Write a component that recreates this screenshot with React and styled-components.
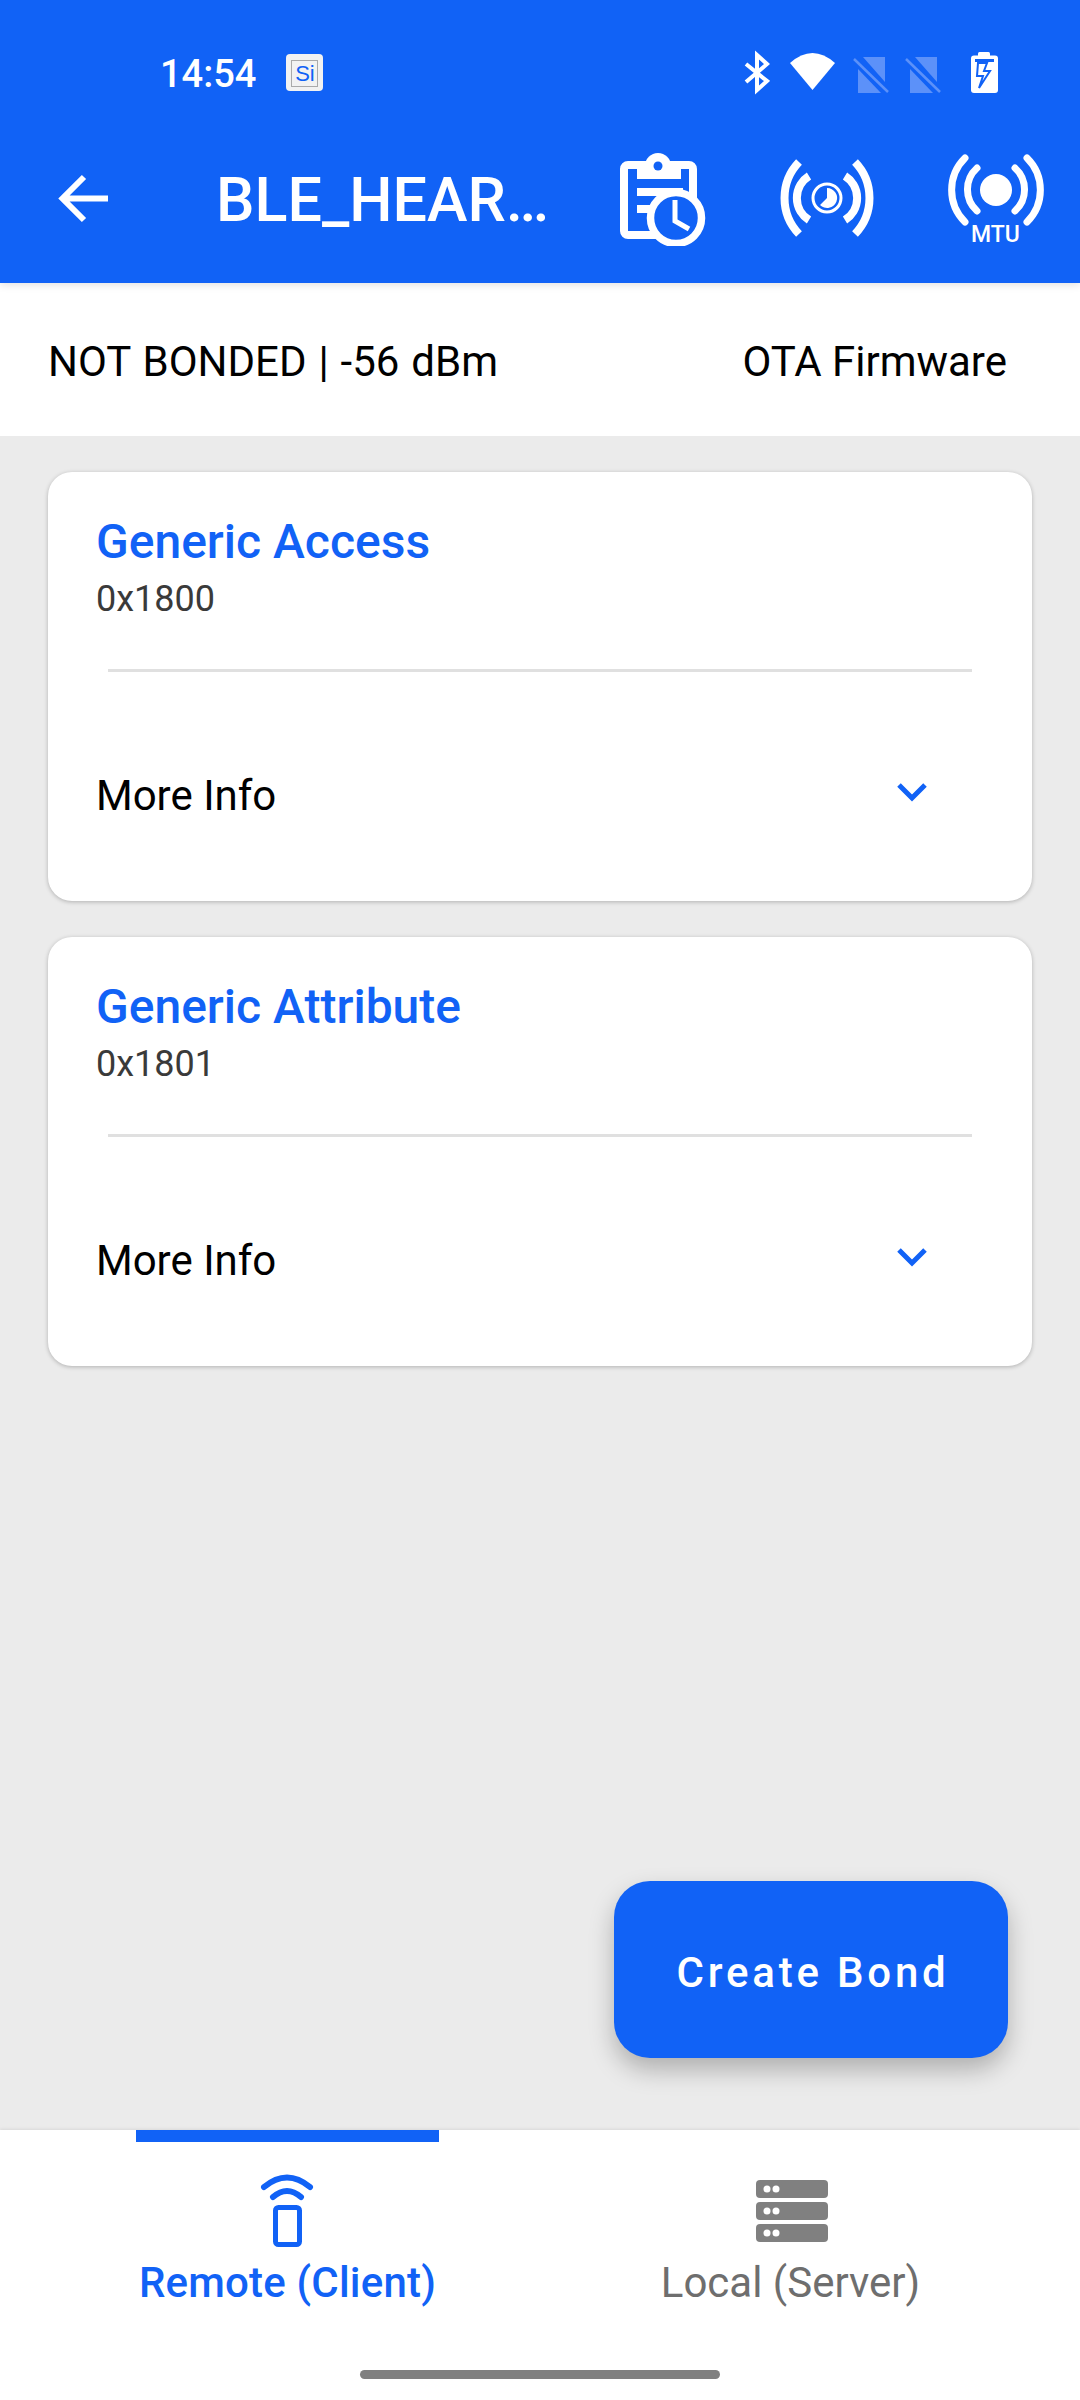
import React from "react";
import styled, { createGlobalStyle } from "styled-components";

const BLUE = "#1162f6";

const services = [
  { name: "Generic Access", uuid: "0x1800" },
  { name: "Generic Attribute", uuid: "0x1801" },
];

function BluetoothIcon() {
  return (
    <Glyph width="28" height="48" viewBox="742 48 28 48" $ml={0}>
      <path d="M746 64 L767 81 L757 90 V55 L767 64 L746 82" fill="none" stroke="#fff" strokeWidth="4" />
    </Glyph>
  );
}

function WifiIcon() {
  return (
    <Glyph width="49" height="48" viewBox="788 48 49 48" $ml={18}>
      <path d="M812.5 90 L790 63 Q812.5 43 835 63 Z" fill="#fff" />
    </Glyph>
  );
}

function SimIcon({ ml }) {
  return (
    <Glyph width="39" height="48" viewBox="851 48 39 48" $ml={ml}>
      <path d="M863 57 H885 V82 Z" fill="#5c91f9" />
      <path d="M858 69 L881 93 H858 Z" fill="#5c91f9" />
      <path d="M854 59 L888 92" stroke="#5c91f9" strokeWidth="2.5" fill="none" />
    </Glyph>
  );
}

function BatteryIcon() {
  return (
    <Glyph width="31" height="48" viewBox="969 48 31 48" $ml={27}>
      <rect x="978" y="52" width="12" height="6" rx="1.5" fill="#fff" />
      <rect x="971" y="55.5" width="27" height="37.5" rx="3" fill="#fff" />
      <rect x="975" y="59" width="19" height="3" fill={BLUE} />
      <path d="M978 63 L977 76 L983 76 L979 88 L990 71 L984 71 L987 63 Z" fill="#fff" stroke={BLUE} strokeWidth="2" />
    </Glyph>
  );
}

function HistoryIcon() {
  return (
    <svg width="94" height="96" viewBox="616 148 94 96">
      <rect x="624" y="163" width="69" height="70" rx="4" fill="none" stroke="#fff" strokeWidth="8" />
      <rect x="637" y="160" width="44" height="17" fill="#fff" />
      <circle cx="658" cy="164" r="13" fill="#fff" />
      <circle cx="658" cy="164" r="4.5" fill={BLUE} />
      <rect x="637" y="186" width="46" height="8" fill="#fff" />
      <rect x="637" y="203" width="20" height="8" fill="#fff" />
      <circle cx="676" cy="216" r="25.5" fill={BLUE} stroke="#fff" strokeWidth="7.5" />
      <path d="M675 198 V219 L689 227" fill="none" stroke="#fff" strokeWidth="5" />
    </svg>
  );
}

function RadioClockIcon() {
  return (
    <svg width="102" height="96" viewBox="776 150 102 96">
      <g fill="none" stroke="#fff" strokeWidth="8">
        <path d="M799 162 A52 52 0 0 0 799 234" />
        <path d="M855 162 A52 52 0 0 1 855 234" />
        <path d="M809 176 A26 26 0 0 0 809 220" />
        <path d="M845 176 A26 26 0 0 1 845 220" />
      </g>
      <circle cx="827" cy="198" r="14" fill="none" stroke="#fff" strokeWidth="3" />
      <path d="M827 188 A10 10 0 1 1 820 205 L827 198 Z" fill="#fff" />
    </svg>
  );
}

function MtuIcon() {
  return (
    <svg width="104" height="112" viewBox="944 150 104 112">
      <g fill="none" stroke="#fff" strokeWidth="7" strokeLinecap="round">
        <path d="M965 158 A45 45 0 0 0 965 222" />
        <path d="M1027 158 A45 45 0 0 1 1027 222" />
        <path d="M977 168 A29 29 0 0 0 977 211" />
        <path d="M1015 168 A29 29 0 0 1 1015 211" />
      </g>
      <circle cx="996" cy="190" r="16" fill="#fff" />
      <MtuText x="995.5" y="242" textAnchor="middle">
        MTU
      </MtuText>
    </svg>
  );
}

function RemoteIcon() {
  return (
    <svg width="75" height="82" viewBox="250 2170 75 82">
      <g fill="none" stroke={BLUE} strokeWidth="6" strokeLinecap="round">
        <path d="M264 2187 Q287 2168 310 2187" />
        <path d="M273 2197 Q287 2185 301 2197" />
      </g>
      <rect x="275.5" y="2207.5" width="24" height="37" rx="3" fill="none" stroke={BLUE} strokeWidth="5" />
    </svg>
  );
}

function LocalIcon() {
  return (
    <svg width="80" height="82" viewBox="751 2170 80 82">
      {[2180, 2202, 2224].map((y) => (
        <g key={y}>
          <rect x="756" y={y} width="72" height="18" rx="4" fill="#808080" />
          <circle cx="767" cy={y + 9} r="3.5" fill="#fff" />
          <circle cx="776" cy={y + 9} r="3.5" fill="#fff" />
        </g>
      ))}
    </svg>
  );
}

function App() {
  return (
    <>
      <GlobalStyle />
      <Page>
        <Header>
          <StatusBar>
            <Time>14:54</Time>
            <SiBadge>
              <SiFrame>Si</SiFrame>
            </SiBadge>
            <StatusIcons>
              <BluetoothIcon />
              <WifiIcon />
              <SimIcon ml={14} />
              <SimIcon ml={13} />
              <BatteryIcon />
            </StatusIcons>
          </StatusBar>
          <Toolbar>
            <svg width="56" height="56" viewBox="56 170 56 56">
              <path d="M108 198.5 H65 M84 177 L62.5 198.5 L84 220" fill="none" stroke="#fff" strokeWidth="6" />
            </svg>
            <Title>BLE_HEAR…</Title>
            <Actions>
              <HistoryIcon />
              <RadioClockIcon />
              <MtuIcon />
            </Actions>
          </Toolbar>
        </Header>

        <SubBar>
          <BondState>NOT BONDED | -56 dBm</BondState>
          <span>OTA Firmware</span>
        </SubBar>

        <Main>
          {services.map((s) => (
            <Card key={s.uuid}>
              <CardName>{s.name}</CardName>
              <CardUuid>{s.uuid}</CardUuid>
              <Divider />
              <MoreRow>
                <span>More Info</span>
                <Chevron width="40" height="28" viewBox="892 778 40 28">
                  <path d="M899 785 L912 798 L925 785" fill="none" stroke={BLUE} strokeWidth="5" />
                </Chevron>
              </MoreRow>
            </Card>
          ))}
          <Fab>Create Bond</Fab>
        </Main>

        <BottomNav>
          <Tabs>
            <Tab $active>
              <RemoteIcon />
              <TabLabel $active>Remote (Client)</TabLabel>
            </Tab>
            <Tab>
              <LocalIcon />
              <TabLabel>Local (Server)</TabLabel>
            </Tab>
          </Tabs>
          <HomeBar />
        </BottomNav>
      </Page>
    </>
  );
}

const GlobalStyle = createGlobalStyle`
  html, body {
    margin: 0;
    padding: 0;
    background: #ebebeb;
  }
  svg {
    display: block;
    flex: none;
  }
`;

const Page = styled.div`
  width: 1080px;
  height: 2400px;
  display: flex;
  flex-direction: column;
  overflow: hidden;
  font-family: Roboto, "Liberation Sans", sans-serif;
  color: #000;
`;

// 상단 헤더
const Header = styled.header`
  position: relative;
  z-index: 2;
  height: 283px;
  background: ${BLUE};
  box-shadow: 0 2px 8px rgba(0, 0, 0, 0.12);
`;

const StatusBar = styled.div`
  height: 62px;
  padding: 48px 80px 0 160px;
  display: flex;
  align-items: flex-start;
`;

const Time = styled.div`
  margin-top: 2px;
  font-size: 38px;
  line-height: 48px;
  font-weight: 500;
  color: #fff;
`;

const SiBadge = styled.div`
  width: 37px;
  height: 37px;
  margin: 6px 0 0 30px;
  box-sizing: border-box;
  padding: 6px 5px;
  background: #f2f2f2;
  border-radius: 4px;
`;

const SiFrame = styled.div`
  height: 25px;
  border: 1px solid #aaa;
  font-family: "Liberation Sans", sans-serif;
  font-size: 22px;
  line-height: 25px;
  text-align: center;
  color: ${BLUE};
`;

const StatusIcons = styled.div`
  margin-left: auto;
  display: flex;
`;

const Glyph = styled.svg`
  margin-left: ${(p) => p.$ml}px;
`;

const Toolbar = styled.div`
  height: 170px;
  padding: 3px 32px 0 56px;
  display: flex;
  align-items: center;
`;

const Title = styled.div`
  margin: 3px 0 0 104px;
  font-size: 61px;
  font-weight: 500;
  color: #fff;
  white-space: nowrap;
`;

// MTU 아이콘은 글자 때문에 아래로 조금 더 길다
const Actions = styled.div`
  height: 96px;
  margin-left: auto;
  display: flex;
  align-items: flex-start;
  gap: 66px;
`;

const MtuText = styled.text`
  font-family: Roboto, sans-serif;
  font-size: 23px;
  font-weight: 500;
  fill: #fff;
`;

// 본딩 상태 바
const SubBar = styled.div`
  height: 150px;
  padding: 3px 73px 0 48px;
  display: flex;
  align-items: center;
  justify-content: space-between;
  background: #fff;
  font-size: 42px;
`;

const BondState = styled.span`
  word-spacing: 1.5px;
`;

const Main = styled.main`
  position: relative;
  flex: 1;
  padding: 36px 48px;
  display: flex;
  flex-direction: column;
  gap: 36px;
  background: #ebebeb;
`;

const Card = styled.section`
  height: 429px;
  box-sizing: border-box;
  padding: 40px 48px 0;
  background: #fff;
  border-radius: 24px;
  box-shadow: 0 1px 4px rgba(0, 0, 0, 0.25);
`;

const CardName = styled.div`
  font-size: 48px;
  line-height: 60px;
  font-weight: 500;
  color: ${BLUE};
`;

const CardUuid = styled.div`
  margin-top: 5px;
  font-size: 36px;
  line-height: 44px;
  color: #3a3a3a;
`;

const Divider = styled.div`
  height: 3px;
  margin: 48px 12px 0;
  background: #e0e0e0;
`;

const MoreRow = styled.div`
  margin-top: 99px;
  padding-right: 52px;
  display: flex;
  justify-content: space-between;
  align-items: flex-start;
  font-size: 42px;
  line-height: 50px;
`;

const Chevron = styled.svg`
  margin-top: 7px;
`;

const Fab = styled.button`
  position: absolute;
  right: 72px;
  bottom: 72px;
  width: 394px;
  height: 177px;
  padding: 5px 0 0 4px;
  border: none;
  border-radius: 36px;
  background: ${BLUE};
  color: #fff;
  font-family: Roboto, sans-serif;
  font-size: 42px;
  font-weight: 500;
  letter-spacing: 3.8px;
  box-shadow: 0 12px 24px rgba(0, 0, 0, 0.25);
`;

// 하단 탭
const BottomNav = styled.nav`
  position: relative;
  height: 270px;
  background: #fff;
  box-shadow: 0 -1px 3px rgba(0, 0, 0, 0.08);
`;

const Tabs = styled.div`
  height: 240px;
  padding-left: 136px;
  display: flex;
  gap: 200px;
`;

const Tab = styled.div`
  width: 303px;
  height: 176px;
  box-sizing: border-box;
  padding-top: ${(p) => (p.$active ? 28 : 40)}px;
  border-top: ${(p) => (p.$active ? `12px solid ${BLUE}` : "none")};
  display: flex;
  flex-direction: column;
  align-items: center;
`;

const TabLabel = styled.div`
  margin-top: 6px;
  font-size: 42px;
  line-height: 50px;
  font-weight: ${(p) => (p.$active ? 500 : 400)};
  letter-spacing: ${(p) => (p.$active ? "0.2px" : "0")};
  color: ${(p) => (p.$active ? BLUE : "#6e6e6e")};
  white-space: nowrap;
`;

const HomeBar = styled.div`
  width: 360px;
  height: 9px;
  margin: 0 auto;
  border-radius: 5px;
  background: #808080;
`;

export default App;
